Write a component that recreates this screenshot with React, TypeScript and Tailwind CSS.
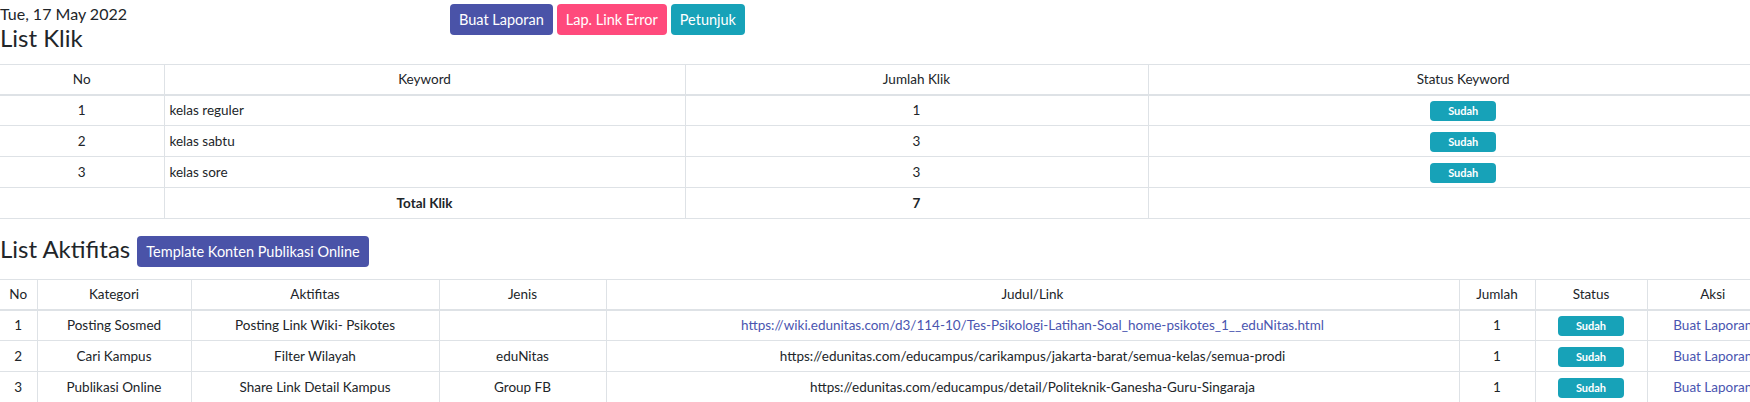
import React from "react";

const klik = [
  { no: 1, keyword: "kelas reguler", jumlah: 1 },
  { no: 2, keyword: "kelas sabtu", jumlah: 3 },
  { no: 3, keyword: "kelas sore", jumlah: 3 },
];

const aktifitas = [
  {
    no: 1,
    kategori: "Posting Sosmed",
    aktifitas: "Posting Link Wiki- Psikotes",
    jenis: "",
    link: "https://wiki.edunitas.com/d3/114-10/Tes-Psikologi-Latihan-Soal_home-psikotes_1__eduNitas.html",
    isLink: true,
    jumlah: 1,
  },
  {
    no: 2,
    kategori: "Cari Kampus",
    aktifitas: "Filter Wilayah",
    jenis: "eduNitas",
    link: "https://edunitas.com/educampus/carikampus/jakarta-barat/semua-kelas/semua-prodi",
    isLink: false,
    jumlah: 1,
  },
  {
    no: 3,
    kategori: "Publikasi Online",
    aktifitas: "Share Link Detail Kampus",
    jenis: "Group FB",
    link: "https://edunitas.com/educampus/detail/Politeknik-Ganesha-Guru-Singaraja",
    isLink: false,
    jumlah: 1,
  },
];

function Sudah() {
  return (
    <span className="inline-flex h-[20px] w-[66px] items-center justify-center rounded-[4px] bg-[#17a2b8] text-[11px] font-bold text-white">
      Sudah
    </span>
  );
}

const th = "h-[30px] border border-[#dee2e6] border-b-2 px-[5px] text-center font-normal leading-[20px]";
const td = "h-[31px] border border-[#dee2e6] px-[5px] leading-[20px]";

export default function App() {
  return (
    <div className="h-[402px] w-[1750px] overflow-hidden bg-white font-['Lato',sans-serif] text-[#212529]">
      <div className="w-[1778px]">
        {/* Header */}
        <div className="flex">
          <div className="w-[450px]">
            <div className="pt-[1px] text-[16px] leading-[25px]">Tue, 17 May 2022</div>
            <h4 className="text-[24px] leading-[24px]">List Klik</h4>
          </div>
          <div className="flex gap-[4px] pt-[4px]">
            <button className="h-[31px] rounded-[4px] bg-[#4a53a8] px-[9px] text-[14.5px] text-white">
              Buat Laporan
            </button>
            <button className="h-[31px] rounded-[4px] bg-[#ff4a7c] px-[9px] text-[14.5px] text-white">
              Lap. Link Error
            </button>
            <button className="h-[31px] rounded-[4px] bg-[#17a2b8] px-[9px] text-[14.5px] text-white">
              Petunjuk
            </button>
          </div>
        </div>

        {/* List Klik */}
        <table className="mt-[14px] w-full table-fixed border-collapse text-[13.5px]">
          <colgroup>
            <col className="w-[164px]" />
            <col className="w-[521px]" />
            <col className="w-[463px]" />
            <col />
          </colgroup>
          <thead>
            <tr>
              <th className={th + " border-l-0"}>No</th>
              <th className={th}>Keyword</th>
              <th className={th}>Jumlah Klik</th>
              <th className={th + " border-r-0"}>Status Keyword</th>
            </tr>
          </thead>
          <tbody>
            {klik.map((k) => (
              <tr key={k.no}>
                <td className={td + " border-l-0 text-center"}>{k.no}</td>
                <td className={td + " text-left"}>{k.keyword}</td>
                <td className={td + " text-center"}>{k.jumlah}</td>
                <td className={td + " border-r-0 text-center"}>
                  <Sudah />
                </td>
              </tr>
            ))}
            <tr>
              <td className={td + " border-l-0"}></td>
              <td className={td + " text-center font-bold"}>Total Klik</td>
              <td className={td + " text-center font-bold"}>7</td>
              <td className={td + " border-r-0"}></td>
            </tr>
          </tbody>
        </table>

        {/* List Aktifitas */}
        <div className="mt-[17px] flex items-center gap-[7px]">
          <h4 className="-mt-[6px] text-[24px] leading-[28px]">List Aktifitas</h4>
          <button className="h-[31px] rounded-[4px] bg-[#4a53a8] px-[9px] text-[14.5px] text-white">
            Template Konten Publikasi Online
          </button>
        </div>

        <table className="mt-[12px] w-full table-fixed border-collapse text-[13.5px]">
          <colgroup>
            <col className="w-[37px]" />
            <col className="w-[154px]" />
            <col className="w-[248px]" />
            <col className="w-[167px]" />
            <col className="w-[853px]" />
            <col className="w-[76px]" />
            <col className="w-[112px]" />
            <col />
          </colgroup>
          <thead>
            <tr>
              <th className={th + " border-l-0"}>No</th>
              <th className={th}>Kategori</th>
              <th className={th}>Aktifitas</th>
              <th className={th}>Jenis</th>
              <th className={th}>Judul/Link</th>
              <th className={th}>Jumlah</th>
              <th className={th}>Status</th>
              <th className={th + " border-r-0"}>Aksi</th>
            </tr>
          </thead>
          <tbody className="text-center">
            {aktifitas.map((a) => (
              <tr key={a.no}>
                <td className={td + " border-l-0"}>{a.no}</td>
                <td className={td}>{a.kategori}</td>
                <td className={td}>{a.aktifitas}</td>
                <td className={td}>{a.jenis}</td>
                <td className={td + " whitespace-nowrap"}>
                  {a.isLink ? <a className="text-[#4a55b0]">{a.link}</a> : a.link}
                </td>
                <td className={td}>{a.jumlah}</td>
                <td className={td}>
                  <Sudah />
                </td>
                <td className={td + " border-r-0 whitespace-nowrap"}>
                  <a className="text-[#4a55b0]">Buat Laporan</a>
                </td>
              </tr>
            ))}
          </tbody>
        </table>
      </div>
    </div>
  );
}
